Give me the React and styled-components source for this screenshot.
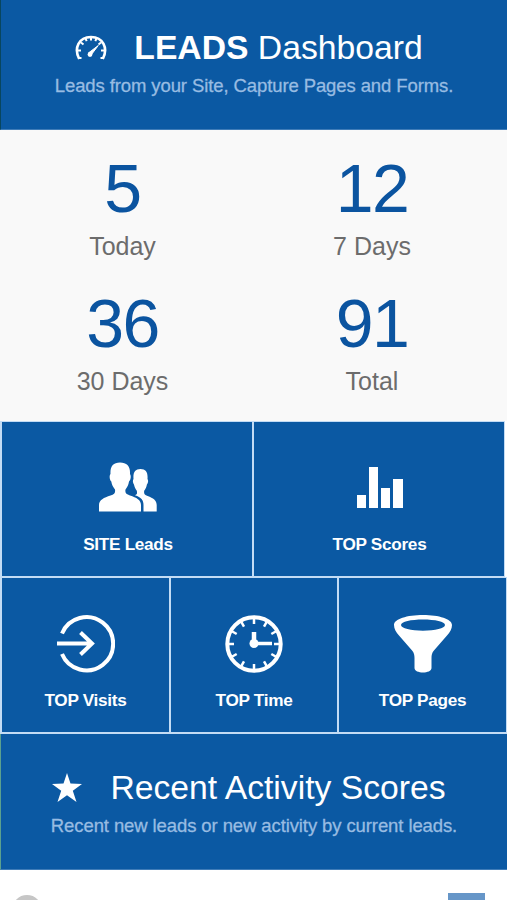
import React, { Component } from 'react'
import styled, { createGlobalStyle } from 'styled-components'

const GlobalStyle = createGlobalStyle`
  body {
    margin: 0;
    background: #fff;
    font-family: "Liberation Sans", Arial, sans-serif;
  }
`

const Page = styled.div`
  width: 507px;
  height: 900px;
  overflow: hidden;
`

const Banner = styled.header`
  box-sizing: border-box;
  height: ${props => props.height};
  padding-top: ${props => props.top};
  border-left: 1px solid ${props => props.edge};
  border-bottom: 1px solid #3f7cb8;
  background: #0b59a3;
  text-align: center;
`

const BannerTitle = styled.h1`
  display: flex;
  justify-content: center;
  align-items: center;
  gap: ${props => props.gap};
  margin: 0;
  padding-right: 10px;
  color: #fff;
  font-size: 33.7px;
  font-weight: normal;
  line-height: 40px;
  white-space: pre;

  svg {
    margin-top: ${props => props.drop};
  }
`

const BannerText = styled.p`
  margin: 7px 0 0;
  color: #98bce2;
  font-size: 18.5px;
  letter-spacing: -0.1px;
  line-height: 24px;
  -webkit-text-stroke: 0.3px #98bce2;
  white-space: nowrap;
`

const Stats = styled.section`
  box-sizing: border-box;
  display: grid;
  grid-template-columns: 249px 249px;
  grid-template-rows: 135px 135px;
  height: 291px;
  padding-top: 20px;
  background: #f9f9f9;
`

const Stat = styled.div`
  padding-right: ${props => props.inset};
  text-align: center;
`

const StatValue = styled.div`
  color: #0b54a0;
  font-size: 68px;
  letter-spacing: -1.5px;
  line-height: 76px;
`

const StatLabel = styled.div`
  color: #6c6c6c;
  font-size: 25px;
  line-height: 30px;
  margin-top: 5px;
`

const TileRow = styled.nav`
  box-sizing: border-box;
  display: grid;
  grid-template-columns: ${props => props.columns};
  column-gap: 2px;
  width: ${props => props.width};
  height: ${props => props.height};
  padding: 1px 1px ${props => props.bottom} 2px;
  background: #c3dcf5;
`

const Tile = styled.a`
  display: flex;
  flex-direction: column;
  align-items: center;
  padding: 37px 0 0 ${props => props.nudge || '0'};
  background: #0b59a3;
  color: #fff;
  font-size: 17.2px;
  font-weight: bold;
  letter-spacing: -0.3px;
  line-height: 20px;
  white-space: nowrap;

  svg {
    display: block;
    margin-bottom: 17px;
  }
`

const Feed = styled.div`
  display: flex;
  justify-content: space-between;
  padding: 23px 22px 0 12px;
`

const Avatar = styled.div`
  box-sizing: border-box;
  width: 30px;
  height: 30px;
  margin-top: 2px;
  border: 5px solid #c6c6c6;
  border-radius: 50%;
`

const Score = styled.div`
  width: 37px;
  height: 30px;
  background: #6696c8;
`

const GaugeIcon = () => (
  <svg width="32" height="26" viewBox="0 0 32 26" fill="none" stroke="#fff">
    <path d="M4.2 24C-1.5 13 4 2 16 2s17.5 11 11.8 22" strokeWidth="2.6" />
    <path d="M4 23h2.500M25.500 23h2.500M2.500 15.500h3.500M26 15.500h3.500M6 7.500l2.500 2M26 7.500l-2.500 2M10.500 3.500l1.200 2.600M21.500 3.500l-1.200 2.600M16 2v3.500" strokeWidth="2" />
    <path d="M23.3 10.5l-9.5 7.2 2.3 2.3z" fill="#fff" strokeWidth="1" />
    <circle cx="15" cy="19.500" r="2.400" fill="#fff" stroke="none" />
  </svg>
)

const StarIcon = () => (
  <svg width="30" height="29" viewBox="0 0 30 29" fill="#fff">
    <path d="M15 0l3.5 10.5L30 11l-9.2 6.8L24.5 29 15 22.3 5.5 29l3.7-11.2L0 11l11.5-.5z" />
  </svg>
)

const PeopleIcon = () => (
  <svg width="58" height="58" viewBox="0 0 58 58" fill="#fff">
    <path d="M0 52.5V46c0-5 5-7.500 11.500-9.500 4-1.300 5-2.500 4.500-6-2-2.500-3.200-5-3.700-8-1.800-1.500-2.200-6-.8-7.500C11 7.500 14 3.500 21 3.500S31.500 7.500 31 15c1.300 1.500.9 6-1 7.500-.5 3-1.500 5.500-3.500 8-.6 3.500.5 4.700 4.500 6C37.500 38.500 42 41 42 46v6.500z" />
    <path d="M44.500 52.500V46c0-5-2.300-7.500-8.500-9.700l1.600-1.100c.6-.7.500-2 .2-3.500-1.500-2-2.300-4-2.800-6.300-1.200-1.200-1.500-4.200-.5-5.500C34 13.500 36 10 41.500 10S49 13.500 48.500 19.900c1 1.300.7 4.300-.6 5.500-.4 2.300-1.200 4.300-2.700 6.300-.4 3.200.2 4 3.400 5.200 5.700 2.100 9.100 4.300 9.100 9.200v6.400z" />
  </svg>
)

const BarsIcon = () => (
  <svg width="46" height="58" viewBox="0 0 46 58" fill="#fff">
    <path d="M0 36h9v13H0zM12 8h9v41h-9zM24 29h9v20h-9zM36 20h10v29H36z" />
  </svg>
)

const EnterIcon = () => (
  <svg width="58" height="58" viewBox="0 0 58 58" fill="none" stroke="#fff" strokeWidth="4">
    <path d="M5 18.500a26.600 26.600 0 1 1 0 20.500" />
    <path d="M0 28.500h35M23.500 17.500l11.500 11-11.500 11" />
  </svg>
)

const ticks = [0, 30, 60, 90, 120, 150, 180, 210, 240, 270, 300, 330]

const ClockIcon = () => (
  <svg width="58" height="58" viewBox="0 0 58 58" fill="none" stroke="#fff">
    <circle cx="29" cy="29" r="26.700" strokeWidth="4" />
    {ticks.map(angle => (
      <path key={angle} d="M29 3v6" strokeWidth="2.5" transform={`rotate(${angle} 29 29)`} />
    ))}
    <path d="M29 17v12" strokeWidth="4.500" />
    <path d="M29 28.500h18" strokeWidth="3.500" />
    <circle cx="29" cy="28.500" r="4.500" fill="#fff" stroke="none" />
  </svg>
)

const FunnelIcon = () => (
  <svg width="58" height="58" viewBox="0 0 58 58" fill="#fff">
    <path fillRule="evenodd" d="M29 0C13 0 0 4 0 10c0 4 2 7 5 10.500L18.500 36C20 38 20.500 40 20.500 43v10c0 6 17 6 17 0V43c0-3 .5-5 2-7L53 20.500C56 17 58 14 58 10 58 4 45 0 29 0zm0 4.500c12 0 22 2.200 22 5.500s-10 5.700-22 5.700S7 13.300 7 10 17 4.500 29 4.500z" />
  </svg>
)

const stats = [
  { value: '5', label: 'Today' },
  { value: '12', label: '7 Days' },
  { value: '36', label: '30 Days' },
  { value: '91', label: 'Total' },
]

export default class App extends Component {
  render() {
    return (
      <Page>
        <GlobalStyle />
        <Banner height="130px" top="27px" edge="#08465f">
          <BannerTitle gap="27px" drop="2px">
            <GaugeIcon />
            <span><b>LEADS</b> Dashboard</span>
          </BannerTitle>
          <BannerText>Leads from your Site, Capture Pages and Forms.</BannerText>
        </Banner>

        <Stats>
          {stats.map((item, i) => (
            <Stat key={item.label} inset={i % 2 ? '3px' : '4px'}>
              <StatValue>{item.value}</StatValue>
              <StatLabel>{item.label}</StatLabel>
            </Stat>
          ))}
        </Stats>

        <TileRow columns="250px 250px" width="505px" height="156px" bottom="1px">
          <Tile nudge="2px"><PeopleIcon />SITE Leads</Tile>
          <Tile nudge="1px"><BarsIcon />TOP Scores</Tile>
        </TileRow>
        <TileRow columns="167px 166px 167px" width="507px" height="157px" bottom="2px">
          <Tile><EnterIcon />TOP Visits</Tile>
          <Tile><ClockIcon />TOP Time</Tile>
          <Tile><FunnelIcon />TOP Pages</Tile>
        </TileRow>

        <Banner height="136px" top="33px" edge="#5ba08f">
          <BannerTitle gap="28px" drop="0">
            <StarIcon />
            <span>Recent Activity Scores</span>
          </BannerTitle>
          <BannerText>Recent new leads or new activity by current leads.</BannerText>
        </Banner>

        <Feed>
          <Avatar />
          <Score />
        </Feed>
      </Page>
    )
  }
}
